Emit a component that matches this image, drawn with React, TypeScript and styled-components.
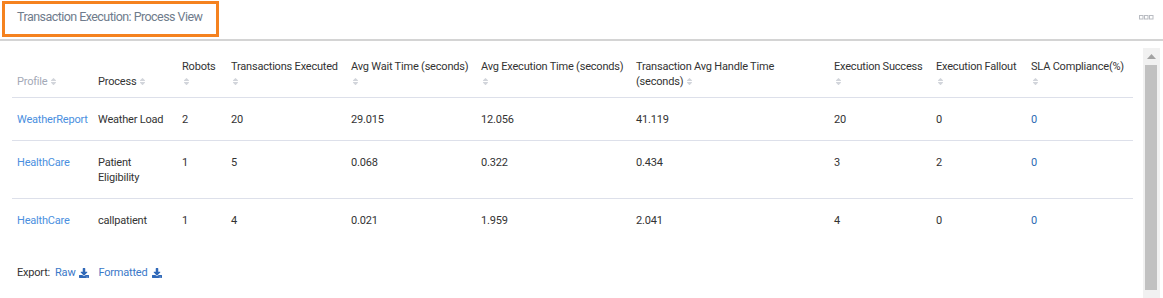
import styled, { createGlobalStyle } from "styled-components";
import { FaSort, FaDownload } from "react-icons/fa";

const GlobalStyle = createGlobalStyle`
    html, body {
        margin: 0;
        padding: 0;
        height: 298px;
        overflow: hidden;
        background: #fff;
        font-family: Roboto, "Liberation Sans", sans-serif;
    }
`;

const Panel = styled.div`
    width: 1163px;
    height: 298px;
    display: flex;
    flex-direction: column;
    background: #fff;
`;

const PanelHeader = styled.div`
    display: flex;
    justify-content: space-between;
    align-items: flex-start;
    padding: 1px 9px 0 2px;
    border-bottom: 2px solid #d4d4d4;
    box-sizing: border-box;
    height: 41px;
    flex-shrink: 0;
`;

const TitleBox = styled.div`
    border: 3px solid #f5821f;
    padding: 5px 14px 9px 12px;
    font-size: 12.5px;
    letter-spacing: -0.55px;
    line-height: 16px;
    color: #6f7c8c;
`;

const Dots = styled.div`
    display: flex;
    margin-top: 14px;
`;

const Body = styled.div`
    display: flex;
    flex: 1;
    min-height: 0;
    margin: 7px 3px 0 0;
`;

const Viewport = styled.div`
    flex: 1;
    overflow: hidden;
    padding: 0 10px 0 12px;
`;

const Rail = styled.div`
    width: 17px;
    flex-shrink: 0;
    display: flex;
    flex-direction: column;
    background: #f1f1f1;
`;

const RailArrow = styled.div`
    height: 17px;
    display: flex;
    align-items: center;
    justify-content: center;
`;

const RailThumb = styled.div`
    height: 225px;
    margin: 0 3px 0 2px;
    background: #c1c1c1;
`;

const Table = styled.table`
    width: 1121px;
    border-collapse: collapse;
    table-layout: fixed;
    font-size: 11px;
    letter-spacing: -0.2px;
    line-height: 15px;
`;

const Th = styled.th<{ $muted?: boolean }>`
    padding: 11px 5px 8px;
    vertical-align: bottom;
    text-align: left;
    font-weight: 400;
    color: ${(p) => (p.$muted ? "#a3a9b6" : "#333")};
    border-bottom: 1px solid #dde0ea;
`;

const HeadLabel = styled.div<{ $max?: number }>`
    max-width: ${(p) => (p.$max ? `${p.$max}px` : "none")};
`;

const SortIcon = styled.span<{ $block?: boolean }>`
    display: ${(p) => (p.$block ? "block" : "inline-block")};
    margin-left: ${(p) => (p.$block ? "0" : "2px")};
    color: #d2d5db;
    font-size: 9px;
    height: 15px;
    vertical-align: top;
    svg {
        margin-top: 3px;
    }
`;

const Row = styled.tr<{ $last?: boolean }>`
    border-bottom: ${(p) => (p.$last ? "none" : "1px solid #dde0ea")};
`;

const Td = styled.td`
    padding: 14px 5px 13px;
    vertical-align: top;
    color: #333;
`;

const ProfileLink = styled.a`
    color: #4a8fe0;
    text-decoration: none;
`;

const Compliance = styled.span`
    color: #2c6ab3;
`;

const ExportBar = styled.div`
    display: flex;
    align-items: center;
    gap: 5px;
    padding: 24px 5px 20px;
    font-size: 11px;
    letter-spacing: -0.2px;
    line-height: 15px;
    color: #333;
`;

const ExportLink = styled.a`
    display: inline-flex;
    align-items: center;
    gap: 4px;
    color: #3a78c8;
    text-decoration: none;
    svg {
        color: #2f68b8;
    }
    & + & {
        margin-left: 4px;
    }
`;

const widths = [81, 84, 49, 120, 130, 155, 198, 102, 95, 107];

const columns = [
    { label: "Profile", muted: true, block: false },
    { label: "Process", block: false },
    { label: "Robots", block: true },
    { label: "Transactions Executed", block: true },
    { label: "Avg Wait Time (seconds)", block: true },
    { label: "Avg Execution Time (seconds)", block: true },
    { label: "Transaction Avg Handle Time (seconds)", block: false, max: 150 },
    { label: "Execution Success", block: true },
    { label: "Execution Fallout", block: true },
    { label: "SLA Compliance(%)", block: true },
];

const rows = [
    ["WeatherReport", "Weather Load", "2", "20", "29.015", "12.056", "41.119", "20", "0", "0"],
    ["HealthCare", "Patient Eligibility", "1", "5", "0.068", "0.322", "0.434", "3", "2", "0"],
    ["HealthCare", "callpatient", "1", "4", "0.021", "1.959", "2.041", "4", "0", "0"],
];

function MenuDots() {
    return (
        <svg width="15" height="5" viewBox="0 0 15 5">
            {[0.5, 5.5, 10.5].map((x) => (
                <rect key={x} x={x} y={0.5} width={3.5} height={3.5} fill="none" stroke="#b9bcc2" strokeWidth={1} />
            ))}
        </svg>
    );
}

function App() {
    return (
        <Panel>
            <GlobalStyle />
            <PanelHeader>
                <TitleBox>Transaction Execution: Process View</TitleBox>
                <Dots>
                    <MenuDots />
                </Dots>
            </PanelHeader>
            <Body>
                <Viewport>
                    <Table>
                        <colgroup>
                            {widths.map((w, i) => (
                                <col key={i} style={{ width: w }} />
                            ))}
                        </colgroup>
                        <thead>
                            <tr>
                                {columns.map((c) => (
                                    <Th key={c.label} $muted={c.muted}>
                                        <HeadLabel $max={c.max}>
                                            {c.label}
                                            <SortIcon $block={c.block}>
                                                <FaSort />
                                            </SortIcon>
                                        </HeadLabel>
                                    </Th>
                                ))}
                            </tr>
                        </thead>
                        <tbody>
                            {rows.map((r, i) => (
                                <Row key={i} $last={i === rows.length - 1}>
                                    {r.map((cell, j) => (
                                        <Td key={j}>
                                            {j === 0 ? (
                                                <ProfileLink href="#">{cell}</ProfileLink>
                                            ) : j === 9 ? (
                                                <Compliance>{cell}</Compliance>
                                            ) : (
                                                cell
                                            )}
                                        </Td>
                                    ))}
                                </Row>
                            ))}
                        </tbody>
                    </Table>
                    <ExportBar>
                        <span>Export:</span>
                        <ExportLink href="#">
                            Raw <FaDownload size={10} />
                        </ExportLink>
                        <ExportLink href="#">
                            Formatted <FaDownload size={10} />
                        </ExportLink>
                    </ExportBar>
                </Viewport>
                <Rail>
                    <RailArrow>
                        <svg width="9" height="5" viewBox="0 0 9 5">
                            <path d="M0 5h9L4.5 0z" fill="#a3a3a3" />
                        </svg>
                    </RailArrow>
                    <RailThumb />
                </Rail>
            </Body>
        </Panel>
    );
}

export default App;
